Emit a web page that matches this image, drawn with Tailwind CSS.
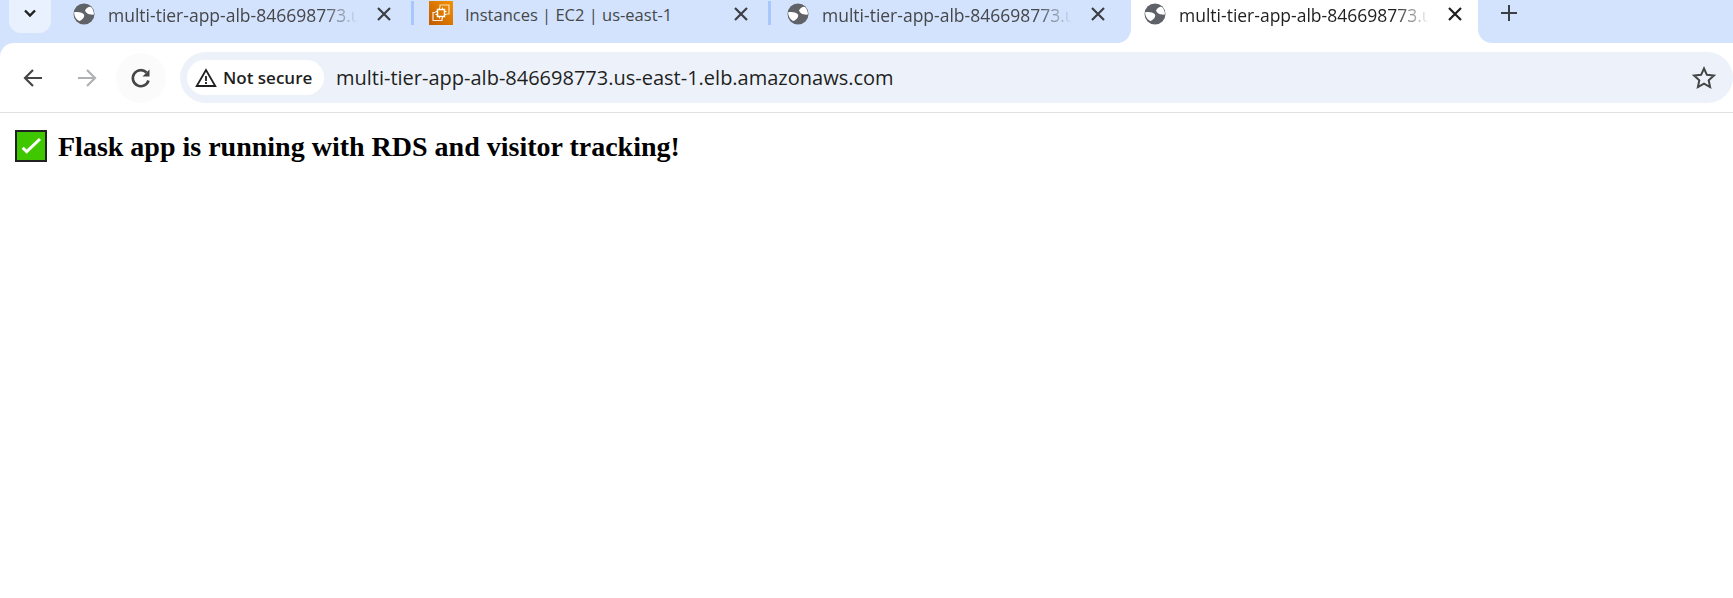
<!DOCTYPE html>
<html lang="en">
<head>
<meta charset="UTF-8">
<title>Flask app</title>
<script src="https://cdn.jsdelivr.net/npm/@tailwindcss/browser@4"></script>
</head>
<body class="bg-white overflow-hidden font-['Open_Sans',sans-serif]">

<!-- Tab strip -->
<div class="flex h-[43px] bg-[#d3e3fd]">
    <div class="flex items-center justify-center ml-[9px] w-[42px] h-[33px] pb-[7px] rounded-b-[12px] bg-[#e9f1fe]">
        <svg width="16" height="16" viewBox="0 0 16 16" fill="none" stroke="#1f1f1f" stroke-width="2.4"><path d="M3 5.500l5 5 5-5"/></svg>
    </div>
    <div class="w-[9px]"></div>

    <!-- Tab 1 -->
    <div class="relative flex w-[357px] pl-[13px] pt-[3px]">
        <svg class="shrink-0" width="22" height="22" viewBox="0 0 22 22"><circle cx="11" cy="11" r="10.500" fill="#5f6368"/><path d="M12 7.500C14 4 17 3 18.500 4.500 20 6.500 21 9 21 11.500 18 12 13.500 11.500 12 7.500zM1 9.500C4 8.500 8.500 9 11 11.500 12 13.500 9.500 17 6.500 18 3.500 17 1.500 13.500 1 9.500z" fill="#fff"/></svg>
        <span class="ml-[13px] w-[250px] overflow-hidden whitespace-nowrap text-[17.500px] leading-[24px] text-[#45474a] [mask-image:linear-gradient(to_right,black_86%,transparent_100%)]">multi-tier-app-alb-846698773.us-east-1.elb.amazonaws.com</span>
        <svg class="ml-[18px] mt-[3px] shrink-0" width="16" height="16" viewBox="0 0 16 16" stroke="#3c3f43" stroke-width="2.200"><path d="M2 2l12 12M14 2L2 14"/></svg>
        <div class="absolute left-[351px] top-[1px] w-[3px] h-[24px] bg-[#a8c7fa]"></div>
    </div>

    <!-- Tab 2 -->
    <div class="relative flex w-[357px] pl-[12px]">
        <svg class="shrink-0 mt-[1px]" width="24" height="24" viewBox="0 0 24 24">
            <defs><linearGradient id="ec2" x1="0" y1="1" x2="1" y2="0"><stop offset="0" stop-color="#c05a00"/><stop offset="1" stop-color="#f59300"/></linearGradient></defs>
            <rect width="24" height="24" fill="url(#ec2)"/>
            <g fill="none" stroke="#fff" stroke-width="1.200">
                <path d="M11 6.500V4h9v9h-2.500" opacity=".75"/>
                <path d="M6.500 11.500H4v8h9v-2.500" opacity=".85"/>
                <rect x="8.500" y="8.500" width="7" height="7" stroke-width="1.500"/>
                <path d="M10.500 6.500v2M13.500 6.500v2M10.500 15.500v2M13.500 15.500v2M6.500 10.500h2M6.500 13.500h2M15.500 10.500h2M15.500 13.500h2" stroke-width="1"/>
            </g>
        </svg>
        <span class="ml-[12px] pt-[3px] w-[250px] overflow-hidden whitespace-nowrap text-[16.500px] leading-[24px] text-[#45474a]">Instances | EC2 | us-east-1</span>
        <svg class="ml-[18px] mt-[6px] shrink-0" width="16" height="16" viewBox="0 0 16 16" stroke="#3c3f43" stroke-width="2.200"><path d="M2 2l12 12M14 2L2 14"/></svg>
        <div class="absolute left-[351px] top-[1px] w-[3px] h-[24px] bg-[#a8c7fa]"></div>
    </div>

    <!-- Tab 3 -->
    <div class="flex w-[357px] pl-[13px] pt-[3px]">
        <svg class="shrink-0" width="22" height="22" viewBox="0 0 22 22"><circle cx="11" cy="11" r="10.500" fill="#5f6368"/><path d="M12 7.500C14 4 17 3 18.500 4.500 20 6.500 21 9 21 11.500 18 12 13.500 11.500 12 7.500zM1 9.500C4 8.500 8.500 9 11 11.500 12 13.500 9.500 17 6.500 18 3.500 17 1.500 13.500 1 9.500z" fill="#fff"/></svg>
        <span class="ml-[13px] w-[250px] overflow-hidden whitespace-nowrap text-[17.500px] leading-[24px] text-[#45474a] [mask-image:linear-gradient(to_right,black_86%,transparent_100%)]">multi-tier-app-alb-846698773.us-east-1.elb.amazonaws.com</span>
        <svg class="ml-[18px] mt-[3px] shrink-0" width="16" height="16" viewBox="0 0 16 16" stroke="#3c3f43" stroke-width="2.200"><path d="M2 2l12 12M14 2L2 14"/></svg>
    </div>

    <!-- Active tab -->
    <div class="relative flex w-[347px] pl-[13px] pt-[3px] bg-white">
        <div class="absolute left-[-14px] bottom-0 w-[14px] h-[14px] bg-white"><div class="w-full h-full bg-[#d3e3fd] rounded-br-[14px]"></div></div>
        <div class="absolute right-[-14px] bottom-0 w-[14px] h-[14px] bg-white"><div class="w-full h-full bg-[#d3e3fd] rounded-bl-[14px]"></div></div>
        <svg class="shrink-0" width="22" height="22" viewBox="0 0 22 22"><circle cx="11" cy="11" r="10.500" fill="#5f6368"/><path d="M12 7.500C14 4 17 3 18.500 4.500 20 6.500 21 9 21 11.500 18 12 13.500 11.500 12 7.500zM1 9.500C4 8.500 8.500 9 11 11.500 12 13.500 9.500 17 6.500 18 3.500 17 1.500 13.500 1 9.500z" fill="#fff"/></svg>
        <span class="ml-[13px] w-[250px] overflow-hidden whitespace-nowrap text-[17.500px] leading-[24px] text-[#1f1f1f] [mask-image:linear-gradient(to_right,black_86%,transparent_100%)]">multi-tier-app-alb-846698773.us-east-1.elb.amazonaws.com</span>
        <svg class="ml-[18px] mt-[3px] shrink-0" width="16" height="16" viewBox="0 0 16 16" stroke="#1f1f1f" stroke-width="2.200"><path d="M2 2l12 12M14 2L2 14"/></svg>
    </div>

    <svg class="ml-[22px] mt-[4px]" width="18" height="18" viewBox="0 0 18 18" stroke="#3c3f43" stroke-width="2"><path d="M9 1v16M1 9h16"/></svg>
</div>

<!-- Toolbar -->
<div class="bg-[#d3e3fd]">
    <div class="flex items-center h-[70px] bg-white rounded-tl-[14px] border-b border-[#e0e0e0] pl-[8px]">
        <div class="flex items-center justify-center w-[50px] h-[50px]">
            <svg width="22" height="22" viewBox="0 0 22 22" fill="none" stroke="#444746" stroke-width="2.200"><path d="M20 11H3M11 3l-8 8 8 8"/></svg>
        </div>
        <div class="flex items-center justify-center w-[50px] h-[50px] ml-[4px]">
            <svg width="22" height="22" viewBox="0 0 22 22" fill="none" stroke="#b0b1b2" stroke-width="2.200"><path d="M2 11h17M11 3l8 8-8 8"/></svg>
        </div>
        <div class="flex items-center justify-center w-[50px] h-[50px] ml-[4px] rounded-full bg-[#fbfbfb]">
            <svg width="22" height="22" viewBox="0 0 22 22" fill="none" stroke="#444746" stroke-width="2.600"><path d="M18.500 13.500a8 8 0 1 1-2-8"/><path d="M19.500 2.500v7h-7z" fill="#444746" stroke="none"/></svg>
        </div>

        <!-- Omnibox -->
        <div class="flex items-center flex-1 h-[51px] ml-[14px] pl-[7px] pr-[17px] rounded-l-[26px] rounded-r-[26px] bg-[#edf2fa]">
            <div class="flex items-center h-[35px] w-[137px] pl-[8px] rounded-full bg-white">
                <svg width="22" height="20" viewBox="0 0 22 20" fill="none" stroke="#1f1f1f" stroke-width="1.800"><path d="M11 2L1.700 18h18.600z"/><path d="M11 8v5M11 14v2"/></svg>
                <span class="ml-[6px] text-[17px] font-semibold text-[#1f1f1f] whitespace-nowrap">Not secure</span>
            </div>
            <span class="ml-[12px] text-[20px] text-[#1f1f1f] whitespace-nowrap">multi-tier-app-alb-846698773.us-east-1.elb.amazonaws.com</span>
            <svg class="ml-auto" width="24" height="24" viewBox="0 0 24 24" fill="none" stroke="#444746" stroke-width="2"><path d="M12 2.500l2.900 6.300 6.900.8-5.100 4.700 1.400 6.800-6.100-3.400-6.100 3.400 1.400-6.800L2.200 9.600l6.900-.8z"/></svg>
        </div>
    </div>
</div>

<!-- Page -->
<div class="flex items-center pl-[15px] pt-[17px]">
    <svg class="shrink-0" width="32" height="32" viewBox="0 0 32 32"><rect x="1" y="1" width="30" height="30" fill="#3fc800" stroke="#222" stroke-width="2"/><path d="M7.700 17.700l4 4L25 9" fill="none" stroke="#fff" stroke-width="3"/></svg>
    <h1 class="ml-[11px] pt-[2px] font-['Liberation_Serif',serif] font-bold text-[28px] leading-[30px] text-black whitespace-nowrap">Flask app is running with RDS and visitor tracking!</h1>
</div>

</body>
</html>
